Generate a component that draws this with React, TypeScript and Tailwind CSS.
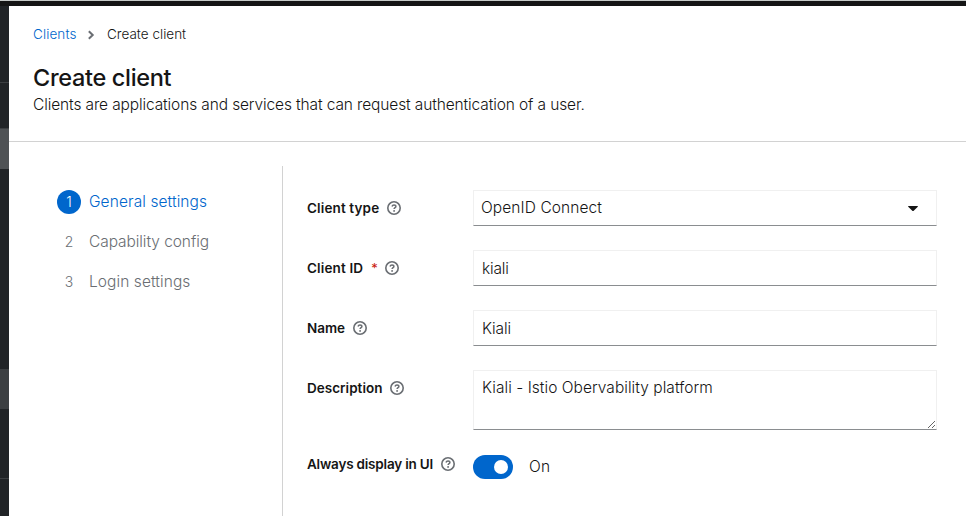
import type { ReactNode } from "react";

function QuestionIcon() {
  return (
    <svg viewBox="0 0 14 14" fill="none" className="ml-2 size-3.5 shrink-0 text-[#6a6e73]">
      <circle cx="7" cy="7" r="6.2" stroke="currentColor" strokeWidth="1.6" />
      <path d="M5 5.500C5.300 4.400 6 4 7 4c1.100 0 1.900.600 1.900 1.500C8.900 6.700 7.100 6.700 7.100 8.100" stroke="currentColor" strokeWidth="1.5" />
      <circle cx="7.1" cy="9.9" r=".95" fill="currentColor" />
    </svg>
  );
}

function AngleRight() {
  return (
    <svg viewBox="0 0 8 10" fill="none" className="ml-[10px] mr-[12px] h-[10px] w-2 text-[#6a6e73]">
      <path d="M1.800 1.300 5.700 5 1.800 8.700" stroke="currentColor" strokeWidth="2" />
    </svg>
  );
}

function Sidebar() {
  return (
    <div className="flex w-[9px] shrink-0 flex-col bg-[#212427]">
      <div className="h-[76px]" />
      <div className="h-px bg-[#3c3f42]" />
      <div className="h-[45px]" />
      <div className="h-px bg-[#3c3f42]" />
      <div className="h-10 bg-[#4f5255]" />
      <div className="h-[200px]" />
      <div className="h-10 bg-[#3c3f42]" />
      <div className="h-[69px]" />
      <div className="h-px bg-[#3c3f42]" />
    </div>
  );
}

function Step({ n, label, active, tracking }: { n: number; label: string; active?: boolean; tracking: string }) {
  return (
    <li className="flex h-6 items-center gap-2">
      <span
        className={
          "flex size-6 items-center justify-center rounded-full text-[14px] font-[350] leading-none " +
          (active ? "bg-[#0066cc] text-white" : "text-[#6a6e73]")
        }
      >
        {n}
      </span>
      <span className={"whitespace-nowrap text-[15.5px] font-[350] leading-6 " + tracking + (active ? " text-[#0066cc]" : " text-[#6a6e73]")}>
        {label}
      </span>
    </li>
  );
}

function Row({ label, required, tracking, children }: { label: string; required?: boolean; tracking: string; children: ReactNode }) {
  return (
    <div className="flex items-start">
      <div className="flex h-9 w-[166px] shrink-0 items-center whitespace-nowrap text-[13.5px] font-semibold text-[#151515]">
        <span className={tracking}>{label}</span>
        {required && <span className="ml-2 w-[6px] text-[13px] font-normal leading-none text-[#c9190b]">*</span>}
        <QuestionIcon />
      </div>
      {children}
    </div>
  );
}

const field = "w-[464px] border border-[#f0f0f0] border-b-[#8a8d90] text-[15.5px] font-[350] text-[#151515] outline-none";

export default function App() {
  return (
    <div className="flex h-[516px] w-[966px] flex-col overflow-hidden bg-white font-['Inter','Liberation_Sans',sans-serif] text-[#151515]">
      <div className="h-px shrink-0 bg-[#c6cac8]" />
      <div className="h-[5px] shrink-0 bg-[#151515]" />
      <div className="flex flex-1">
        <Sidebar />
        <main className="flex flex-1 flex-col">
          <header className="h-[136px] border-b border-[#d2d2d2] pl-6 pt-[18px]">
            <nav className="flex h-[21px] items-center text-[13.5px] font-[350]">
              <a className="w-[44px] whitespace-nowrap tracking-[0.1px] text-[#0066cc]">Clients</a>
              <AngleRight />
              <span className="tracking-[0.01px]">Create client</span>
            </nav>
            <h1 className="mt-[17px] h-[31px] text-[23.5px] font-medium leading-[31px] tracking-[-0.32px]">Create client</h1>
            <p className="h-6 whitespace-nowrap text-[15.5px] font-[350] leading-6 tracking-[-0.12px]">
              Clients are applications and services that can request authentication of a user.
            </p>
          </header>
          <div className="flex flex-1 pt-6">
            <ol className="flex w-[274px] flex-col gap-4 border-r border-[#d2d2d2] pl-12 pt-6">
              <Step n={1} label="General settings" active tracking="tracking-[0.09px]" />
              <Step n={2} label="Capability config" tracking="tracking-[-0.07px]" />
              <Step n={3} label="Login settings" tracking="tracking-[0.08px]" />
            </ol>
            <form className="flex flex-col gap-6 pl-6 pt-6">
              <Row label="Client type" tracking="tracking-[0.13px]">
                <div className={field + " flex h-9 items-center justify-between pl-[7px] pr-[18px] tracking-[0.09px]"}>
                  <span>OpenID Connect</span>
                  <svg viewBox="0 0 10 5" className="h-[5px] w-[10px]" fill="currentColor">
                    <path d="M.6 0h8.800c.5 0 .7.500.4.800L5.700 4.700a1 1 0 0 1-1.400 0L.2.800C-.1.500.1 0 .6 0Z" />
                  </svg>
                </div>
              </Row>
              <Row label="Client ID" required tracking="tracking-[0.15px]">
                <input className={field + " h-9 px-2 tracking-[-0.15px]"} defaultValue="kiali" />
              </Row>
              <Row label="Name" tracking="tracking-[-0.05px]">
                <input className={field + " h-9 px-2 tracking-[-0.15px]"} defaultValue="Kiali" />
              </Row>
              <Row label="Description" tracking="tracking-[0.02px]">
                <textarea
                  className={field + " h-[60px] px-2 pt-[5px] leading-6 tracking-[0.04px]"}
                  defaultValue="Kiali - Istio Obervability platform"
                />
              </Row>
              <div className="-mt-2">
                <Row label="Always display in UI" tracking="tracking-[-0.2px]">
                  <div className="flex h-9 items-center gap-4 pt-[6px]">
                    <span className="flex h-6 w-10 items-center justify-end rounded-full bg-[#0066cc] pr-[5px]">
                      <span className="size-3.5 rounded-full bg-white" />
                    </span>
                    <span className="text-[15.5px] font-[350] leading-6 tracking-[0.3px]">On</span>
                  </div>
                </Row>
              </div>
            </form>
          </div>
        </main>
      </div>
    </div>
  );
}
